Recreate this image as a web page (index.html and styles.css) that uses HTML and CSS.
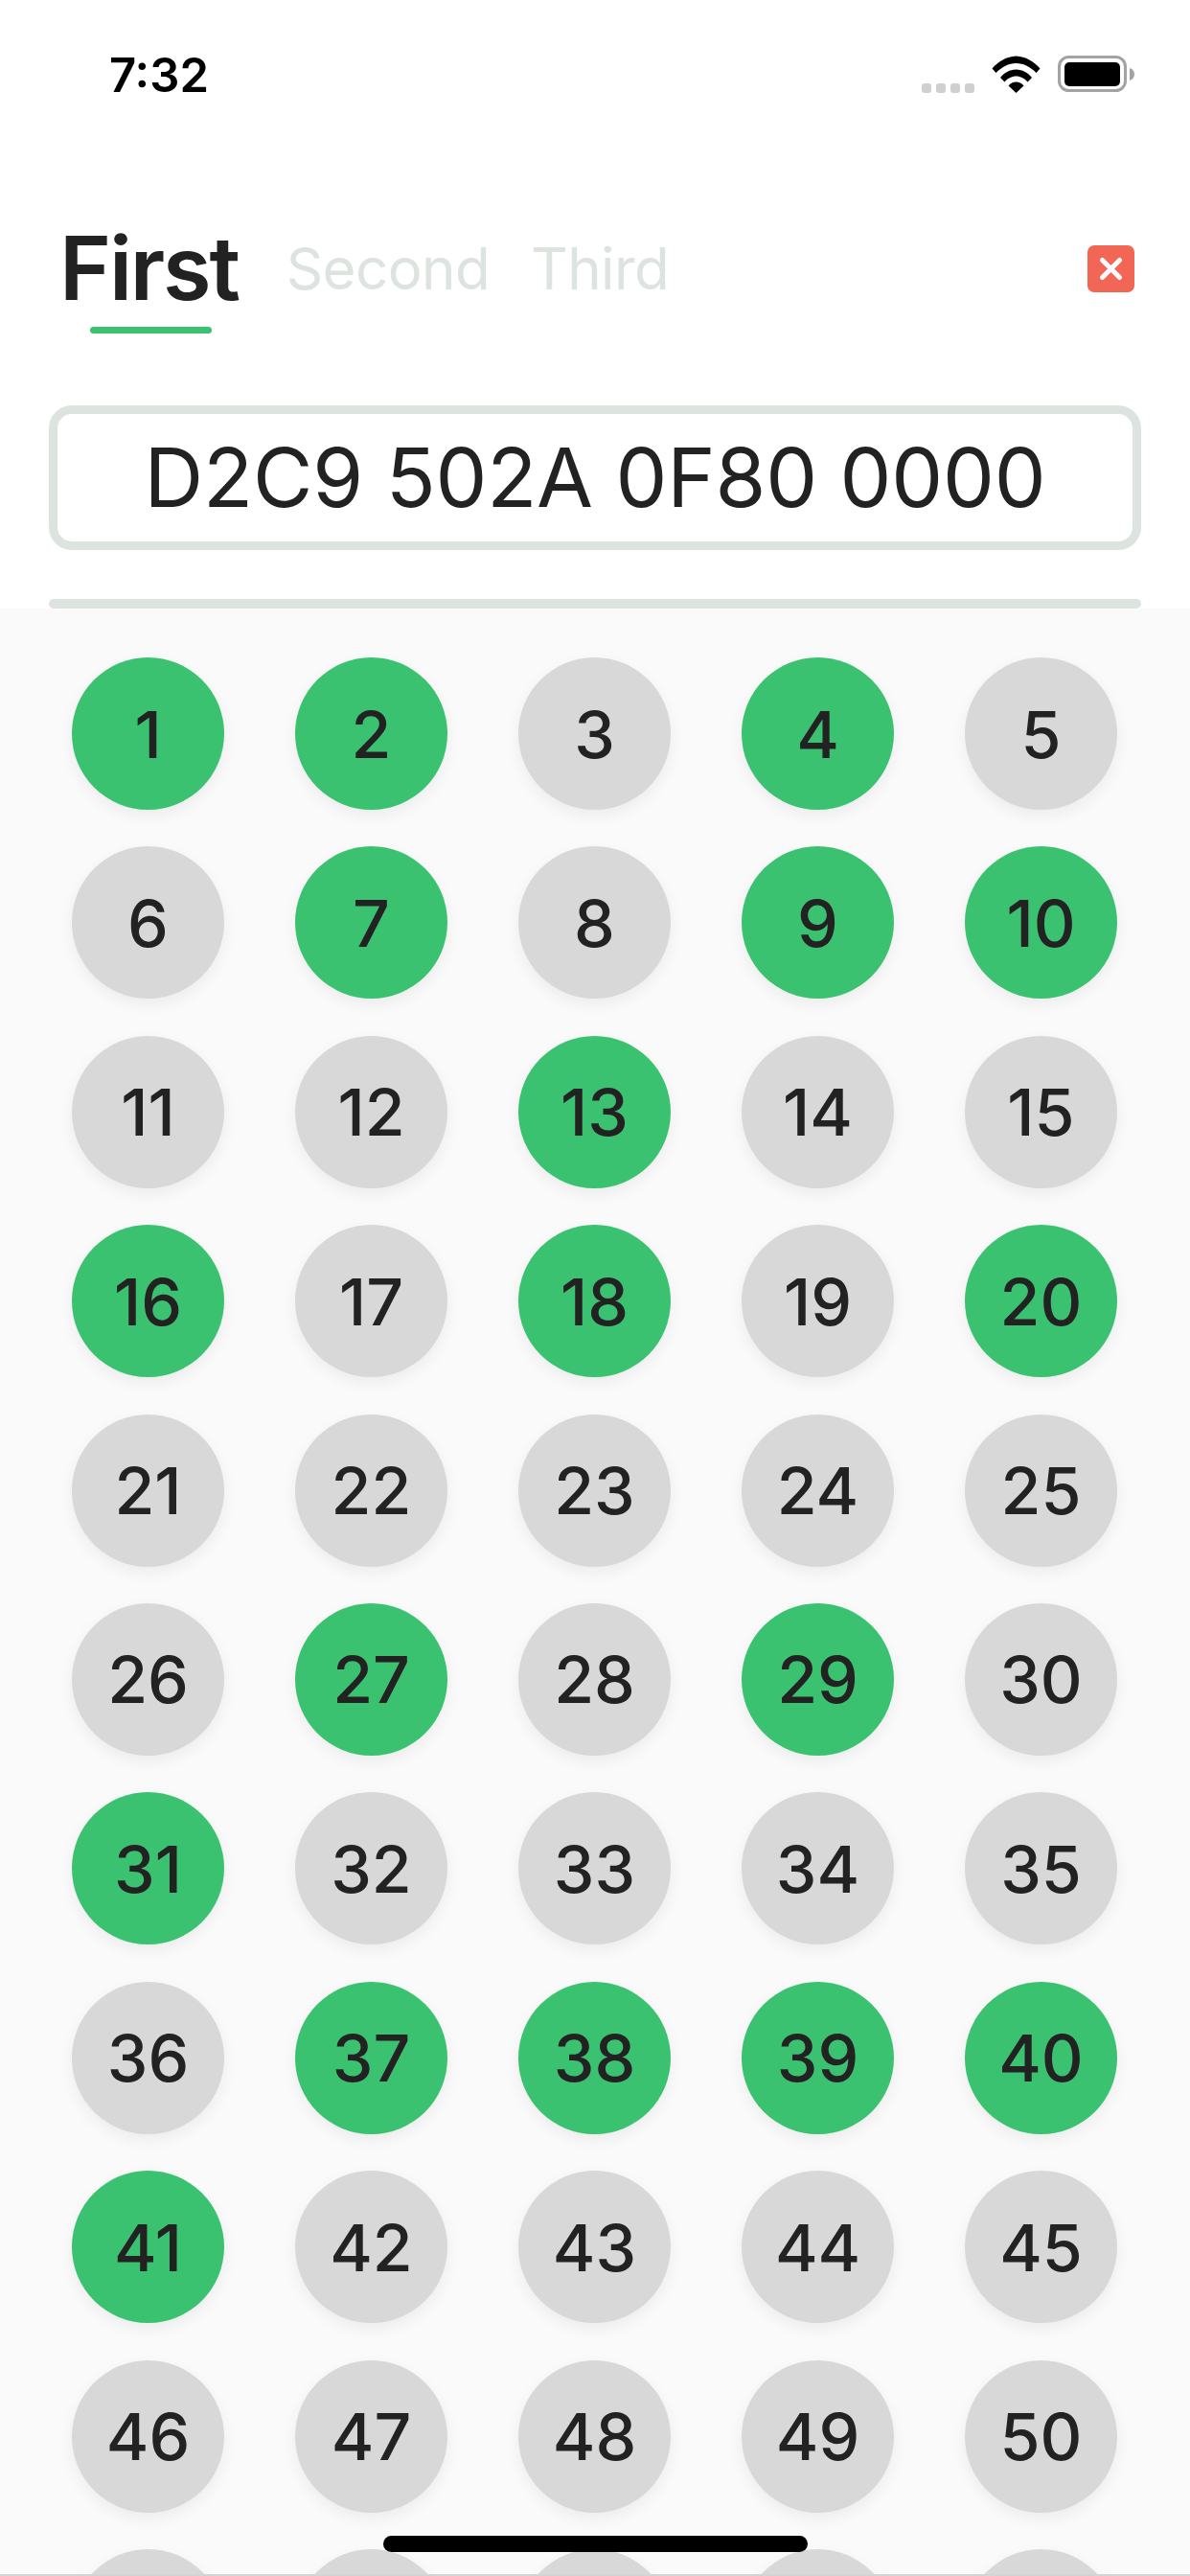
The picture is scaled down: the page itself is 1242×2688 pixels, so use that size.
FILE: index.html
```html
<!DOCTYPE html>
<html lang="en">
<head>
<meta charset="utf-8">
<title>Numbers</title>
<link rel="stylesheet" href="styles.css">
</head>
<body>
<div class="screen">
  <header class="status">
    <span class="time">7:32</span>
    <div class="status-icons">
      <div class="dots"><i></i><i></i><i></i><i></i></div>
      <svg class="wifi" viewBox="0 0 51 39"><path d="M0.5 13.5C7 6 15.5 1 25.5 0.5C35.5 1 44 6 50.5 13.5L46.5 18C40.5 12 33.5 8 25.5 8C17.5 8 10.5 12 4.5 18Z"/><path d="M9 23C13 18 19 14.5 25.5 14.5C32 14.5 38 18 42 23L37.500 27.500C34.500 24 30 21.500 25.500 21.500C21 21.500 16.500 24 13.500 27.500Z"/><path d="M17.500 31.500C19.500 29 22.500 27.500 25.500 27.500C28.500 27.500 31.500 29 33.500 31.500L25.500 39Z"/></svg>
      <svg class="battery" viewBox="0 0 80 39"><rect x="1.500" y="1.500" width="69" height="35" rx="10" fill="none" stroke="#a3a3a3" stroke-width="3"/><rect x="7" y="7" width="58" height="25" rx="5" fill="#000"/><path d="M75 13C78 14 80 16 80 19.500C80 23 78 25 75 26Z" fill="#a3a3a3"/></svg>
    </div>
  </header>
  <nav class="tabs">
    <div class="tab-active">First<span class="underline"></span></div>
    <div class="tab">Second</div>
    <div class="tab">Third</div>
    <button class="close" aria-label="Close"><svg viewBox="0 0 49 49"><path d="M15.500 15.500L33.500 33.500M33.500 15.500L15.500 33.500" stroke="#fff" stroke-width="5" stroke-linecap="round"/></svg></button>
  </nav>
  <div class="code">D2C9 502A 0F80 0000</div>
  <div class="divider"></div>
  <main class="grid">
    <div class="ball on">1</div><div class="ball on">2</div><div class="ball">3</div><div class="ball on">4</div><div class="ball">5</div>
    <div class="ball">6</div><div class="ball on">7</div><div class="ball">8</div><div class="ball on">9</div><div class="ball on">10</div>
    <div class="ball">11</div><div class="ball">12</div><div class="ball on">13</div><div class="ball">14</div><div class="ball">15</div>
    <div class="ball on">16</div><div class="ball">17</div><div class="ball on">18</div><div class="ball">19</div><div class="ball on">20</div>
    <div class="ball">21</div><div class="ball">22</div><div class="ball">23</div><div class="ball">24</div><div class="ball">25</div>
    <div class="ball">26</div><div class="ball on">27</div><div class="ball">28</div><div class="ball on">29</div><div class="ball">30</div>
    <div class="ball on">31</div><div class="ball">32</div><div class="ball">33</div><div class="ball">34</div><div class="ball">35</div>
    <div class="ball">36</div><div class="ball on">37</div><div class="ball on">38</div><div class="ball on">39</div><div class="ball on">40</div>
    <div class="ball on">41</div><div class="ball">42</div><div class="ball">43</div><div class="ball">44</div><div class="ball">45</div>
    <div class="ball">46</div><div class="ball">47</div><div class="ball">48</div><div class="ball">49</div><div class="ball">50</div>
    <div class="ball"></div><div class="ball"></div><div class="ball"></div><div class="ball"></div><div class="ball"></div>
  </main>
  <div class="home"></div>
</div>
</body>
</html>
```
FILE: styles.css
```css
* { box-sizing: border-box; }
html, body { margin: 0; padding: 0; background: #fff; }
.screen {
  position: relative;
  width: 1242px;
  height: 2688px;
  overflow: hidden;
  display: flex;
  flex-direction: column;
  font-family: Inter, "Liberation Sans", sans-serif;
  color: #222;
}
.status {
  height: 213px;
  flex: none;
  display: flex;
  justify-content: space-between;
  align-items: flex-start;
  padding: 50px 58px 0 114px;
}
.time {
  font-size: 49px;
  font-weight: 600;
  line-height: 58px;
  color: #000;
}
.status-icons { display: flex; align-items: flex-start; padding-top: 8px; }
.dots { display: flex; gap: 5px; margin-top: 29px; margin-right: 18px; }
.dots i { width: 10px; height: 10px; border-radius: 3px; background: #cfcfcf; }
.wifi { width: 51px; height: 39px; fill: #000; margin-right: 18px; }
.battery { width: 80px; height: 39px; }
.tabs {
  flex: none;
  height: 210px;
  display: flex;
  align-items: flex-start;
  padding: 0 58px 0 62px;
}
.tab-active {
  position: relative;
  font-size: 92px;
  font-weight: 600;
  letter-spacing: -2.200px;
  line-height: 134px;
  margin-right: 50px;
}
.underline {
  position: absolute;
  left: 32px;
  top: 128px;
  width: 127px;
  height: 7px;
  border-radius: 4px;
  background: #3ac270;
}
.tab {
  font-size: 60px;
  letter-spacing: -0.600px;
  line-height: 134px;
  color: #dde3df;
  margin-right: 43px;
}
.close {
  margin: 43px 0 0 auto;
  width: 49px;
  height: 49px;
  padding: 0;
  border: 0;
  border-radius: 7px;
  background: #f26656;
}
.close svg { display: block; width: 49px; height: 49px; }
.code {
  flex: none;
  height: 151px;
  margin: 0 51px;
  border: 9px solid #dde3df;
  border-radius: 24px;
  background: #fff;
  text-align: center;
  font-size: 85.500px;
  letter-spacing: -0.250px;
  line-height: 133px;
}
.divider {
  flex: none;
  height: 10px;
  margin: 51px 51px 0;
  border-radius: 5px;
  background: #dde3df;
}
.grid {
  flex: 1;
  background: #fafafa;
  display: grid;
  grid-template-columns: repeat(5, 159px);
  grid-auto-rows: 159px;
  column-gap: 74px;
  row-gap: 38.400px;
  padding: 51px 0 0 75px;
  border-bottom: 2px solid #d4d4d4;
  overflow: hidden;
}
.ball {
  width: 159px;
  height: 159px;
  border-radius: 50%;
  background: #d8d8d8;
  box-shadow: 0 6px 16px rgba(0, 0, 0, 0.06);
  display: flex;
  align-items: center;
  justify-content: center;
  font-size: 68px;
  font-weight: 500;
}
.ball.on { background: #3ac270; }
.home {
  position: absolute;
  left: 400px;
  top: 2646px;
  width: 443px;
  height: 17px;
  border-radius: 9px;
  background: #000;
}
```
